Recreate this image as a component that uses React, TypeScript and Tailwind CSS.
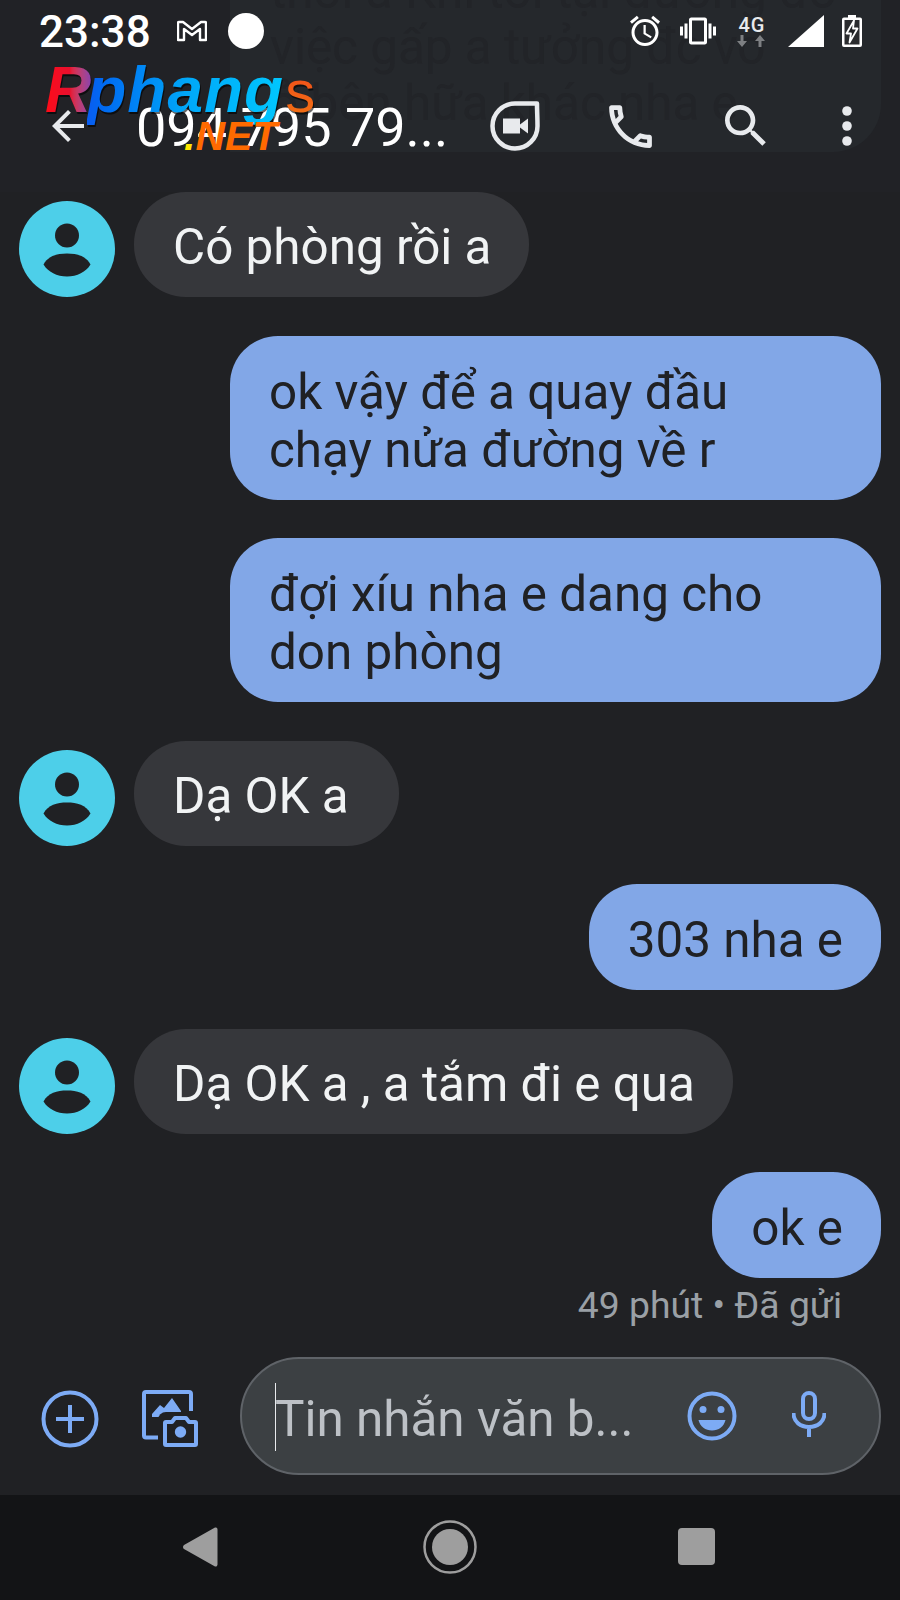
const ROBOTO = "font-['Roboto',sans-serif]";

type Message = { id: number; from: "them" | "me"; lines: string[]; wide?: boolean };

const messages: Message[] = [
  { id: 1, from: "them", lines: ["Có phòng rồi a"] },
  { id: 2, from: "me", lines: ["ok vậy để a quay đầu", "chạy nửa đường về r"], wide: true },
  { id: 3, from: "me", lines: ["đợi xíu nha e dang cho", "don phòng"], wide: true },
  { id: 4, from: "them", lines: ["Dạ OK a "] },
  { id: 5, from: "me", lines: ["303 nha e"] },
  { id: 6, from: "them", lines: ["Dạ OK a , a tắm đi e qua"] },
  { id: 7, from: "me", lines: ["ok e"] },
];

function Avatar() {
  return (
    <div className="flex h-[96px] w-[96px] shrink-0 items-center justify-center rounded-full bg-[#4dcfe9]">
      <svg width="96" height="96" viewBox="0 0 96 96" fill="#202124">
        <circle cx="48" cy="34.5" r="12" />
        <path d="M24.5 63.5C29 55 38 52.5 48 52.5s19 2.500 23.500 11C67 71 58 75.500 48 75.500S29 71 24.500 63.500z" />
      </svg>
    </div>
  );
}

function Bubble({ m }: { m: Message }) {
  if (m.from === "them") {
    return (
      <div className="flex items-end gap-[19px] pl-[19px]">
        <Avatar />
        <div className="whitespace-pre rounded-[52px] bg-[#36373b] pb-[21px] pl-[39px] pr-[38px] pt-[26px] text-[#f1f3f4]">
          {m.lines.join("\n")}
        </div>
      </div>
    );
  }
  return (
    <div className="self-end pr-[19px]">
      <div
        className={
          m.wide
            ? "w-[651px] whitespace-pre rounded-[48px] bg-[#82a7e7] px-[39px] pb-[21px] pt-[27px] text-[#202124]"
            : "whitespace-pre rounded-[48px] bg-[#82a7e7] pb-[21px] pl-[39px] pr-[38px] pt-[27px] text-[#202124]"
        }
      >
        {m.lines.join("\n")}
      </div>
    </div>
  );
}

function StatusIcons() {
  return (
    <div className="flex items-center">
      <svg width="36" height="36" viewBox="0 0 24 24" fill="#fff" className="ml-[-4px]">
        <path d="M22 5.72l-4.6-3.86-1.29 1.53 4.6 3.86L22 5.72zM7.88 3.39L6.6 1.86 2 5.71l1.29 1.53 4.59-3.85zM12.5 8H11v6l4.75 2.85.75-1.23-4-2.37V8zM12 4c-4.97 0-9 4.03-9 9s4.02 9 9 9c4.97 0 9-4.03 9-9s-4.03-9-9-9zm0 16c-3.87 0-7-3.13-7-7s3.13-7 7-7 7 3.13 7 7-3.13 7-7 7z" />
      </svg>
      <svg width="36" height="36" viewBox="0 0 24 24" fill="#fff" className="ml-[17px]">
        <path d="M0 15h2V9H0v6zm3 2h2V7H3v10zm19-8v6h2V9h-2zm-3 8h2V7h-2v10zM16.5 3h-9C6.67 3 6 3.67 6 4.5v15c0 .83.67 1.5 1.5 1.5h9c.83 0 1.5-.67 1.5-1.5v-15c0-.83-.67-1.5-1.5-1.5zM16 19H8V5h8v14z" />
      </svg>
      <div className="ml-[20px] flex w-[32px] flex-col items-center">
        <span className={`${ROBOTO} text-[20px] font-medium leading-[20px] tracking-[1px] text-[#e8eaed]`}>4G</span>
        <svg width="30" height="13" viewBox="0 0 30 13" fill="#7d7f82">
          <path d="M5 12L0 6h3.500V0h3v6H10z" />
          <path d="M23 0l5 6h-3.500v6h-3V6H18z" />
        </svg>
      </div>
      <svg width="36" height="32" viewBox="0 0 36 32" fill="#fff" className="ml-[20px]">
        <path d="M36 0v32H0z" />
      </svg>
      <svg width="20" height="32" viewBox="0 0 20 32" className="ml-[18px]">
        <path d="M6 0h8v2.500h4a2 2 0 0 1 2 2V30a2 2 0 0 1-2 2H2a2 2 0 0 1-2-2V4.500a2 2 0 0 1 2-2h4z" fill="#fff" />
        <rect x="2.500" y="5" width="15" height="24.500" fill="#2a2b2e" />
        <path d="M12 5.500L4.500 18.500H9L7.500 27.500 15.500 13.500H11z" fill="#202124" stroke="#fff" strokeWidth="1.800" strokeLinejoin="round" />
      </svg>
    </div>
  );
}

function AppBarIcons() {
  return (
    <div className="flex items-center">
      <svg width="50" height="50" viewBox="0 0 50 50" fill="none" stroke="#e8eaed" strokeWidth="4.500">
        <path d="M47 2.500H25A22.500 22.500 0 1 0 47.500 25C47.500 17 47 10 47 2.500z" strokeLinejoin="round" />
        <path d="M13 17.500h17v6l8-6v15l-8-6v6H13z" fill="#e8eaed" stroke="none" />
      </svg>
      <svg width="57" height="57" viewBox="0 0 24 24" fill="#e8eaed" className="ml-[62px]">
        <path d="M6.540 5c.06.89.21 1.760.45 2.590l-1.200 1.200c-.41-1.200-.67-2.470-.76-3.790h1.510m9.860 12.020c.85.24 1.720.39 2.600.45v1.490c-1.320-.09-2.590-.35-3.800-.75l1.200-1.190M7.500 3H4c-.55 0-1 .45-1 1 0 9.390 7.610 17 17 17 .55 0 1-.45 1-1v-3.490c0-.55-.45-1-1-1-1.240 0-2.450-.2-3.570-.57-.1-.04-.21-.05-.31-.05-.26 0-.51.1-.71.29l-2.200 2.200c-2.830-1.450-5.150-3.760-6.590-6.590l2.200-2.200c.28-.28.36-.67.25-1.020C8.700 6.450 8.500 5.250 8.500 4c0-.55-.45-1-1-1z" />
      </svg>
      <svg width="56" height="56" viewBox="0 0 24 24" fill="#e8eaed" className="ml-[59px]">
        <path d="M15.500 14h-.79l-.28-.27C15.410 12.590 16 11.110 16 9.500 16 5.910 13.090 3 9.500 3S3 5.910 3 9.500 5.910 16 9.500 16c1.610 0 3.090-.59 4.230-1.570l.27.28v.79l5 4.990L20.490 19l-4.990-5zm-6 0C7.010 14 5 11.990 5 9.500S7.010 5 9.500 5 14 7.010 14 9.500 11.990 14 9.500 14z" />
      </svg>
      <svg width="10" height="40" viewBox="0 0 10 40" fill="#e8eaed" className="ml-[68px]">
        <circle cx="5" cy="5" r="4.800" />
        <circle cx="5" cy="20" r="4.800" />
        <circle cx="5" cy="35" r="4.800" />
      </svg>
    </div>
  );
}

function Logo() {
  // watermark sits over the app bar
  return (
    <div className="absolute left-[45px] top-[50px] h-[110px] w-[280px] select-none font-['Liberation_Sans',sans-serif] italic">
      <div className="flex items-baseline text-[64px] font-bold leading-[80px] drop-shadow-[1px_2px_0_rgba(0,0,0,0.6)]">
        <span className="bg-linear-to-r from-[#ff0a14] via-[#e8102e] to-[#7a3cc0] bg-clip-text pr-1 text-transparent">R</span>
        <span className="ml-[-8px] bg-linear-to-r from-[#0a5cf0] via-[#00a8f8] to-[#00c8ff] bg-clip-text pr-1 tracking-[1px] text-transparent">phang</span>
        <span className="ml-[-3px] bg-linear-to-b from-[#f23a1c] to-[#f07a10] bg-clip-text text-[60px] font-normal not-italic text-transparent">s</span>
      </div>
      <div className="absolute left-[139px] top-[65px] text-[41px] font-bold leading-[42px] text-[#ff6a00]">
        <span className="text-[#ffe600]">.</span>NET
      </div>
    </div>
  );
}

export default function App() {
  return (
    <div className={`${ROBOTO} relative flex h-[1600px] w-[900px] flex-col overflow-hidden bg-[#202124] text-[49.4px] leading-[58px]`}>
      <header className="relative h-[192px] shrink-0 bg-[#212226]">
        {/* previous bubble scrolled under the bar */}
        <div className="absolute left-[230px] top-[-37px] h-[189px] w-[651px] overflow-hidden whitespace-pre rounded-br-[48px] bg-[#25282c] pl-[40px] leading-[56px] text-[#222428]">
          {"thời a Khi tới tại đường đó\nviệc gấp a tưởng đc vô\nở bên hữa khác nha e"}
        </div>
        <div className="relative flex items-center justify-between pl-[39px] pr-[38px] pt-[9px]">
          <div className="flex items-center">
            <span className="mt-[2px] text-[44px] font-medium leading-[42px] text-white">23:38</span>
            <svg width="30" height="22" viewBox="0 0 30 22" fill="none" stroke="#fff" strokeWidth="2.400" className="ml-[26px]">
              <path d="M2 2h4l9 7 9-7h4a1 1 0 0 1 1 1v17H23V9l-8 6-8-6v11H1V3a1 1 0 0 1 1-1z" strokeLinejoin="round" />
            </svg>
            <div className="ml-[21px] h-[36px] w-[36px] rounded-full bg-white" />
          </div>
          <StatusIcons />
        </div>
        <div className="relative mt-[41px] flex items-center justify-between pl-[44px] pr-[48px]">
          <div className="flex items-center">
            <svg width="48" height="48" viewBox="0 0 24 24" fill="#e8eaed">
              <path d="M20 11H7.830l5.590-5.590L12 4l-8 8 8 8 1.410-1.410L7.830 13H20v-2z" />
            </svg>
            <span className="ml-[44px] mt-[4px] text-[54px] leading-[60px] text-white">094 795 79...</span>
          </div>
          <AppBarIcons />
        </div>
        <Logo />
      </header>

      <main className="flex flex-col gap-[38.5px]">
        {messages.map((m) => (
          <Bubble key={m.id} m={m} />
        ))}
      </main>

      <div className="mt-[6px] pr-[58px] text-right text-[37.3px] leading-[42px] text-[#9aa0a6]">49 phút • Đã gửi</div>

      <div className="mt-auto flex h-[138px] shrink-0 items-start pl-[41px] pr-[19px]">
        <svg width="58" height="58" viewBox="0 0 58 58" fill="none" stroke="#7dabf5" strokeWidth="4" className="mt-[33px]">
          <circle cx="29" cy="29" r="26.500" />
          <path d="M29 15v28M15 29h28" />
        </svg>
        <svg width="58" height="58" viewBox="0 0 58 58" className="ml-[43px] mt-[33px]">
          <path d="M19 47.500H4a2 2 0 0 1-2-2V4a2 2 0 0 1 2-2h43a2 2 0 0 1 2 2v17" fill="none" stroke="#7dabf5" strokeWidth="4" />
          <path d="M10 42V24l8-9 4 3 8-10 9 13v6H10z" fill="#7dabf5" />
          <path d="M16 42V30a8 8 0 0 1 8-8H40V58H16z" fill="#202124" />
          <path d="M24 32h6l3-4h11l3 4h6a1 1 0 0 1 1 1v21a1 1 0 0 1-1 1H24a1 1 0 0 1-1-1V33a1 1 0 0 1 1-1z" fill="#202124" stroke="#7dabf5" strokeWidth="4" strokeLinejoin="round" />
          <circle cx="38.500" cy="42" r="5.700" fill="#7dabf5" />
        </svg>
        <div className="relative ml-[40px] flex h-[118px] flex-1 items-center rounded-[59px] border-2 border-[#5f6368] bg-[#3c4043] pl-[33px] pr-[53px]">
          <span className="mt-[6px] flex-1 text-[#bdc1c6]">Tin nhắn văn b...</span>
          <div className="absolute left-[33px] top-[24px] h-[68px] w-px bg-[#e8eaed]" />
          <svg width="50" height="50" viewBox="0 0 50 50" className="mr-[55px]">
            <circle cx="25" cy="25" r="22.500" fill="none" stroke="#7dabf5" strokeWidth="4" />
            <circle cx="16" cy="18.500" r="3.500" fill="#7dabf5" />
            <circle cx="34" cy="18.500" r="3.500" fill="#7dabf5" />
            <path d="M11.500 29h27C37 35.500 31.500 39.500 25 39.500S13 35.500 11.500 29z" fill="#7dabf5" />
          </svg>
          <svg width="34" height="46" viewBox="0 0 34 46" fill="none" stroke="#7dabf5" strokeWidth="4" className="mb-[5px]">
            <rect x="11" y="2" width="12" height="26" rx="6" />
            <path d="M1.500 22c0 9 7 14 15.500 14s15.500-5 15.500-14M17 35v11" />
          </svg>
        </div>
      </div>

      <nav className="flex h-[105px] shrink-0 items-center bg-[#131416] pb-[2px]">
        <svg width="36" height="42" viewBox="0 0 36 42" fill="#9e9e9e" className="ml-[182px]">
          <path d="M33 1.500a2 2 0 0 1 2.500 2v35a2 2 0 0 1-2.500 2L2 23a2.500 2.500 0 0 1 0-4z" />
        </svg>
        <svg width="54" height="54" viewBox="0 0 54 54" className="ml-[205px]">
          <circle cx="27" cy="27" r="25.500" fill="none" stroke="#9e9e9e" strokeWidth="2.500" />
          <circle cx="27" cy="27" r="18" fill="#9e9e9e" />
        </svg>
        <div className="ml-[201px] h-[37px] w-[37px] rounded-[4px] bg-[#9e9e9e]" />
      </nav>
    </div>
  );
}
